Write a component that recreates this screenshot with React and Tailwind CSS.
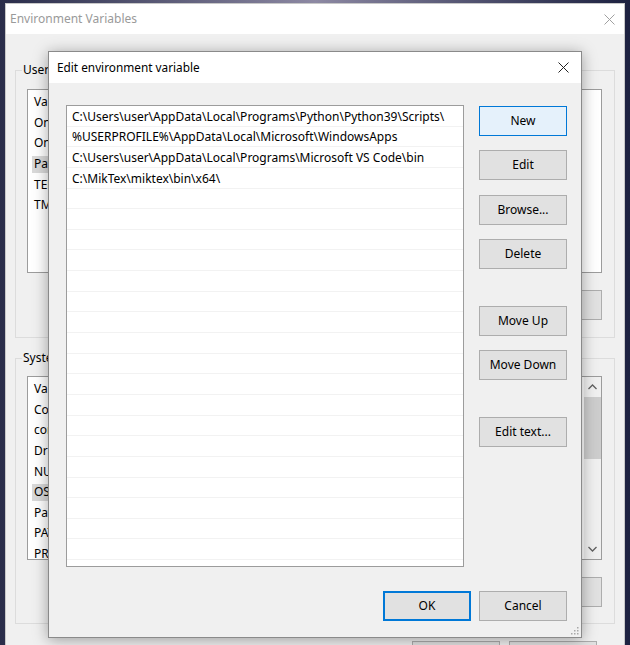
import React from 'react'

const font = "font-['Noto_Sans','Open_Sans','Liberation_Sans',sans-serif]"

const dialogPaths = [
  'C:\\Users\\user\\AppData\\Local\\Programs\\Python\\Python39\\Scripts\\',
  '%USERPROFILE%\\AppData\\Local\\Microsoft\\WindowsApps',
  'C:\\Users\\user\\AppData\\Local\\Programs\\Microsoft VS Code\\bin',
  'C:\\MikTex\\miktex\\bin\\x64\\',
]

const userVars = ['Variable', 'OneDrive', 'OneDriveConsumer', 'Path', 'TEMP', 'TMP']
const systemVars = [
  'Variable',
  'ComSpec',
  'configsetroot',
  'DriverData',
  'NUMBER_OF_PROCESSORS',
  'OS',
  'Path',
  'PATHEXT',
  'PROCESSOR_ARCHITECTURE',
]

function CloseIcon({ className }) {
  return (
    <svg width="11" height="11" viewBox="0 0 11 11" className={className}>
      <path d="M0.5 0.5L10.5 10.5M10.5 0.5L0.5 10.5" stroke="currentColor" strokeWidth="1" fill="none" />
    </svg>
  )
}

function WinButton({ children, variant = 'normal', className = '' }) {
  const look = {
    normal: 'bg-[#e1e1e1] border border-[#adadad]',
    hover: 'bg-[#e5f1fb] border border-[#0078d7]',
    primary: 'bg-[#e1e1e1] border-2 border-[#0078d7]',
  }
  return (
    <div
      className={`w-[88px] h-[30px] shrink-0 flex items-center justify-center text-[12px] text-black ${look[variant]} ${className}`}
    >
      {children}
    </div>
  )
}

function VarList({ items, selected, scrollbar }) {
  return (
    <div className="relative h-[184px] bg-white border border-[#9c9c9c] overflow-hidden pt-[2px]">
      {items.map((name) => (
        <div key={name} className="h-[20.6px] flex items-center">
          <span
            className={`ml-[4px] h-[17px] flex items-center pl-[2px] pr-[6px] text-[12px] text-black whitespace-nowrap ${
              name === selected ? 'bg-[#d9d9d9]' : ''
            }`}
          >
            {name}
          </span>
        </div>
      ))}
      {scrollbar && (
        <div className="absolute right-0 top-0 bottom-0 w-[17px] bg-[#f0f0f0] flex flex-col items-center">
          <div className="h-[20px] flex items-center justify-center text-[#606060]">
            <svg width="9" height="6" viewBox="0 0 9 6">
              <path d="M0.5 5L4.5 1L8.5 5" stroke="currentColor" strokeWidth="1.3" fill="none" />
            </svg>
          </div>
          <div className="w-[17px] h-[62px] bg-[#cdcdcd]" />
          <div className="flex-1" />
          <div className="h-[20px] flex items-center justify-center text-[#606060]">
            <svg width="9" height="6" viewBox="0 0 9 6">
              <path d="M0.5 1L4.5 5L8.5 1" stroke="currentColor" strokeWidth="1.3" fill="none" />
            </svg>
          </div>
        </div>
      )}
    </div>
  )
}

function GroupBox({ label, children, className = '' }) {
  return (
    <fieldset className={`border border-[#dcdcdc] px-[11px] pr-[12px] ${className}`}>
      <legend className="-ml-[5px] px-[1px] text-[12px] text-black leading-[16px]">{label}</legend>
      {children}
    </fieldset>
  )
}

function EnvironmentWindow() {
  return (
    <div className="absolute left-[5px] top-[3px] w-[620px] h-[680px] bg-[#f0f0f0] border border-[#c8c8c8] flex flex-col">
      <div className="h-[30px] shrink-0 bg-white flex items-center justify-between pl-[4px] pr-[9px]">
        <span className="text-[12px] text-[#9a9a9a]">Environment Variables</span>
        <CloseIcon className="text-[#a0a0a0]" />
      </div>
      <div className="flex flex-col px-[9px] pt-[28px]">
        <GroupBox label="User variables for user" className="h-[276px]">
          <div className="mt-[11px]">
            <VarList items={userVars} selected="Path" />
          </div>
          <div className="flex justify-end gap-[9px] mt-[17px]">
            <WinButton>New...</WinButton>
            <WinButton>Edit...</WinButton>
            <WinButton>Delete</WinButton>
          </div>
        </GroupBox>
        <GroupBox label="System variables" className="h-[274px] mt-[12px]">
          <div className="mt-[10px]">
            <VarList items={systemVars} selected="OS" scrollbar />
          </div>
          <div className="flex justify-end gap-[9px] mt-[17px]">
            <WinButton>New...</WinButton>
            <WinButton>Edit...</WinButton>
            <WinButton>Delete</WinButton>
          </div>
        </GroupBox>
        <div className="flex justify-end gap-[9px] mt-[17px] pr-[18px]">
          <WinButton>OK</WinButton>
          <WinButton>Cancel</WinButton>
        </div>
      </div>
    </div>
  )
}

function EditDialog() {
  const rows = Array.from({ length: 23 }, (_, i) => dialogPaths[i] || '')
  return (
    <div className="absolute left-[48px] top-[51px] w-[534px] h-[587px] bg-[#f0f0f0] border border-[#8a8a8a] shadow-[0_2px_14px_rgba(0,0,0,0.35)] flex flex-col">
      <div className="h-[31px] shrink-0 bg-white flex items-center justify-between pl-[8px] pr-[12px]">
        <span className="text-[11.8px] text-black">Edit environment variable</span>
        <CloseIcon className="text-[#222]" />
      </div>
      <div className="relative flex-1 flex flex-col pl-[17px] pr-[14px] pt-[22px]">
        <div className="flex gap-[15px]">
          <div className="w-[398px] h-[462px] bg-white border border-[#9c9c9c] overflow-hidden">
            {rows.map((p, i) => (
              <div
                key={i}
                className="h-[20.65px] border-b border-[#f2f2f2] flex items-center pl-[5px] pt-[2px] text-[12px] text-black whitespace-nowrap"
              >
                {p}
              </div>
            ))}
          </div>
          <div className="flex flex-col">
            <WinButton variant="hover" className="mt-[1px]">New</WinButton>
            <WinButton className="mt-[14px]">Edit</WinButton>
            <WinButton className="mt-[15px]">Browse...</WinButton>
            <WinButton className="mt-[14px]">Delete</WinButton>
            <WinButton className="mt-[37px]">Move Up</WinButton>
            <WinButton className="mt-[14px]">Move Down</WinButton>
            <WinButton className="mt-[37px]">Edit text...</WinButton>
          </div>
        </div>
        <div className="flex justify-end gap-[8px] mt-[24px]">
          <WinButton variant="primary">OK</WinButton>
          <WinButton>Cancel</WinButton>
        </div>
        <svg className="absolute right-[2px] bottom-[2px]" width="8" height="8" viewBox="0 0 8 8">
          <rect x="6" y="0" width="1.5" height="1.5" fill="#a8a8a8" />
          <rect x="3" y="3" width="1.5" height="1.5" fill="#a8a8a8" />
          <rect x="6" y="3" width="1.5" height="1.5" fill="#a8a8a8" />
          <rect x="0" y="6" width="1.5" height="1.5" fill="#a8a8a8" />
          <rect x="3" y="6" width="1.5" height="1.5" fill="#a8a8a8" />
          <rect x="6" y="6" width="1.5" height="1.5" fill="#a8a8a8" />
        </svg>
      </div>
    </div>
  )
}

export default function App() {
  return (
    <div className={`relative w-[630px] h-[645px] overflow-hidden bg-gradient-to-r from-[#2a2d4a] via-[#8d89a3] to-[#1d2140] ${font}`}>
      <EnvironmentWindow />
      <EditDialog />
    </div>
  )
}
